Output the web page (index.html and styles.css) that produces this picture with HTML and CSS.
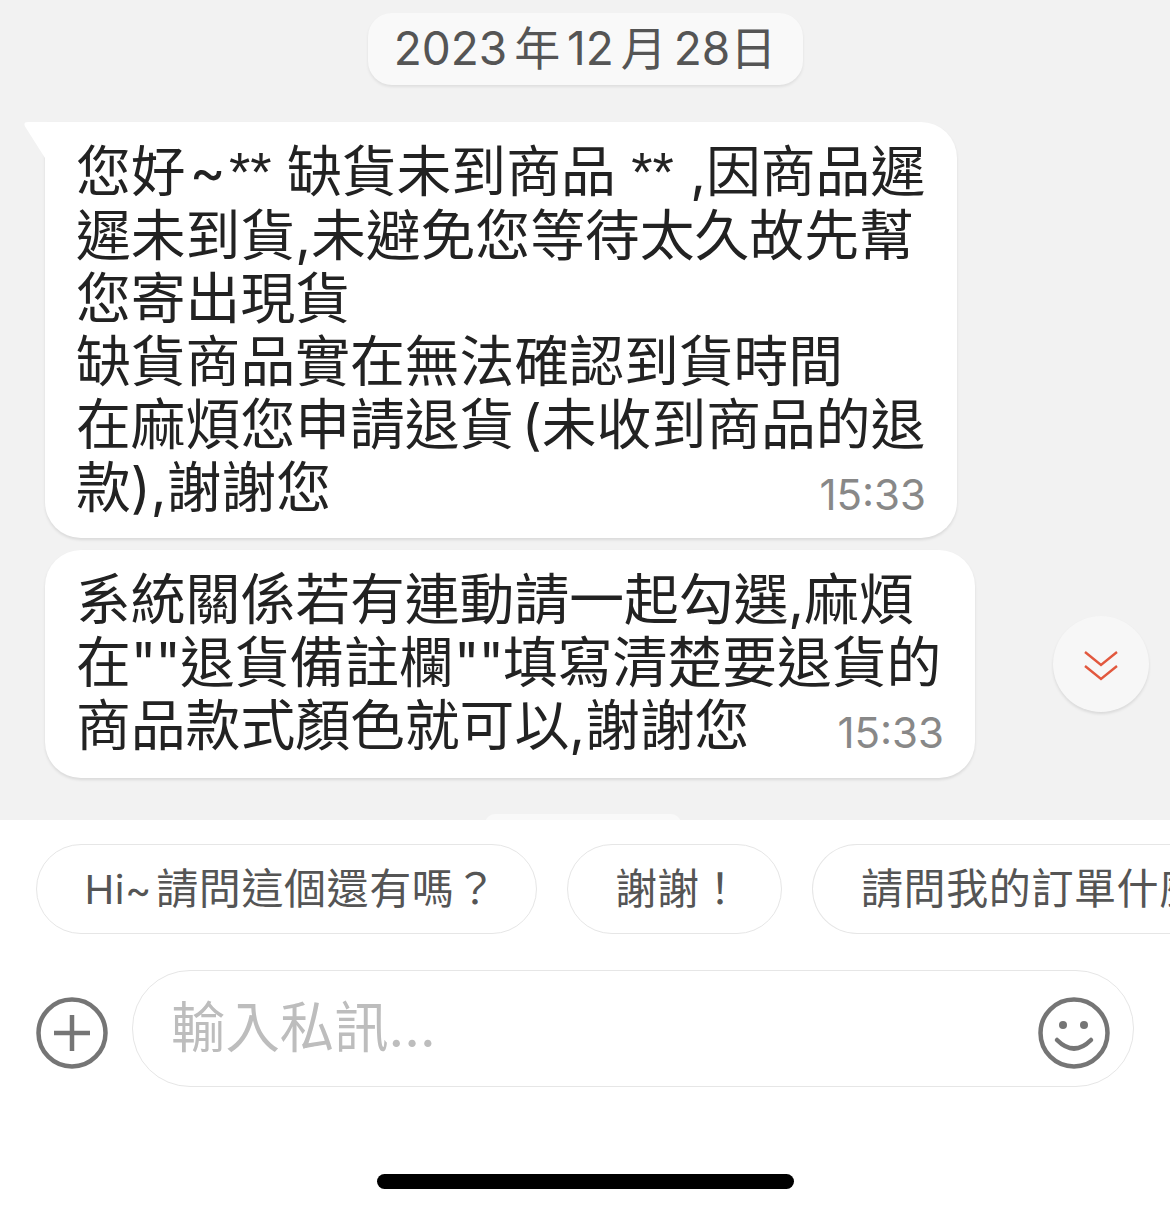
FILE: index.html
```html
<!DOCTYPE html>
<html lang="zh-Hant">
<head>
<meta charset="utf-8">
<title>聊聊</title>
<link rel="stylesheet" href="styles.css">
</head>
<body>
<div class="app">
  <main class="chat">
    <div class="date-row"><div class="date">2023 年 12 月 28日</div></div>
    <div class="bubble bubble-first">
      <svg class="tail" width="24" height="36" viewBox="0 0 24 36"><path d="M21 0H4Q-2 0 2 6L21 36Z" fill="#fff"/></svg>
      <div class="msg">您好<span class="tilde">~</span><span class="star star-a">**</span> 缺貨未到商品 <span class="star star-b">**</span> ,因商品遲<br>遲未到貨,未避免您等待太久故先幫<br>您寄出現貨<br>缺貨商品實在無法確認到貨時間<br>在麻煩您申請退<span class="close">貨 (</span>未收到商品的退</div>
      <div class="last"><span class="msg">款),謝謝您</span><span class="time">15:33</span></div>
    </div>
    <div class="bubble bubble-second">
      <div class="msg">系統關係若有連動請一起勾選,麻煩<br>在<span class="quote">""</span>退貨備註欄<span class="quote">""</span>填寫清楚要退貨的</div>
      <div class="last"><span class="msg">商品款式顏色就可以,謝謝您</span><span class="time">15:33</span></div>
    </div>
    <div class="peek"></div>
    <button class="scroll-down">
      <svg width="36" height="32" viewBox="0 0 36 32" fill="none" stroke="#e2583e" stroke-width="2.4"><path d="M2 2L18 15L34 2"/><path d="M2 16L18 29L34 16"/></svg>
    </button>
  </main>
  <footer class="panel">
    <div class="chips">
      <div class="chip chip-a"><span class="hi">Hi~</span>請問這個還有嗎？</div>
      <div class="chip chip-b">謝謝！</div>
      <div class="chip chip-c">請問我的訂單什麼</div>
    </div>
    <div class="compose">
      <svg class="icon" width="72" height="72" viewBox="0 0 72 72" fill="none" stroke="#757575" stroke-width="4.5"><circle cx="36" cy="36" r="33.5"/><path d="M18 36H54M36 18V54"/></svg>
      <div class="input">
        <span class="placeholder">輸入私訊...</span>
        <svg class="icon" width="72" height="72" viewBox="0 0 72 72" fill="none" stroke="#757575" stroke-width="4.5"><circle cx="36" cy="36" r="33.5"/><circle cx="25" cy="28" r="4" fill="#757575" stroke="none"/><circle cx="46" cy="28" r="4" fill="#757575" stroke="none"/><path d="M19 43Q36 60 53 43" stroke-linecap="round"/></svg>
      </div>
    </div>
    <div class="home-row"><div class="home-bar"></div></div>
  </footer>
</div>
</body>
</html>
```

FILE: styles.css
```css
* { box-sizing: border-box; }
html, body { margin: 0; padding: 0; background: #fff; }
body { font-family: Inter, "Noto Sans CJK TC", sans-serif; }
.app { width: 1170px; height: 1213px; overflow: hidden; display: flex; flex-direction: column; }
.chat { position: relative; height: 820px; background: #f2f2f2; padding: 13px 0 0 45px; overflow: hidden; flex: none; }
.date-row { display: flex; justify-content: center; margin: 0 0 37px -45px; }
.date { height: 72px; width: 435px; border-radius: 24px; background: #f9f9f9; box-shadow: 0 2px 3px rgba(0,0,0,.08); color: #555; font-size: 46px; line-height: 71px; text-align: center; white-space: nowrap; word-spacing: -6px; }
.bubble { position: relative; background: #fff; border-radius: 36px; box-shadow: 0 2px 3px rgba(0,0,0,.1); color: #222; padding: 18px 31px 16px 31px; margin-bottom: 12px; }
.bubble-first { width: 912px; height: 416px; border-top-left-radius: 0; }
.bubble-second { width: 930px; height: 228px; }
.tail { position: absolute; left: -21px; top: 0; }
.msg { font-size: 54.8px; line-height: 63px; white-space: nowrap; }
.tilde { margin-left: 4px; }
.star { font-family: "Liberation Sans", sans-serif; }
.star-a { margin-left: 3px; }
.star-b { margin-right: 1px; }
.close { word-spacing: -8px; }
.quote { letter-spacing: -1px; }
.last { display: flex; justify-content: space-between; align-items: flex-end; }
.time { font-size: 42px; line-height: 62px; color: #888; margin-bottom: -7px; }
.peek { position: absolute; left: 485px; top: 814px; width: 196px; height: 20px; background: #f9f9f9; border-radius: 16px; }
.scroll-down { position: absolute; left: 1053px; top: 616px; width: 96px; height: 96px; padding: 4px 0 0; border: 0; border-radius: 50%; background: #f7f7f7; box-shadow: 0 2px 3px rgba(0,0,0,.1); display: flex; align-items: center; justify-content: center; }
.panel { flex: 1; background: #fff; position: relative; display: flex; flex-direction: column; }
.chips { display: flex; gap: 30px; padding: 24px 0 0 36px; overflow: hidden; }
.chip { flex: none; height: 90px; border: 1.5px solid #e6e6e6; border-radius: 45px; font-size: 42px; line-height: 87px; color: #555; text-align: center; white-space: nowrap; }
.hi { font-size: 40px; margin-right: 4px; }
.chip-a { width: 501px; text-align: left; padding-left: 47.5px; letter-spacing: .6px; }
.chip-b { width: 215px; padding-left: 7px; }
.chip-c { width: 400px; text-align: left; padding-left: 48px; letter-spacing: .6px; border-right: 0; border-radius: 45px 0 0 45px; }
.compose { display: flex; align-items: center; gap: 24px; padding: 36px 36px 0; }
.compose .icon { margin-top: 9px; }
.input { flex: none; width: 1002px; height: 117px; border: 1.5px solid #e6e6e6; border-radius: 58px; display: flex; align-items: center; justify-content: space-between; padding: 0 23px 0 38px; }
.input .icon { margin-top: 8px; }
.placeholder { font-size: 54.4px; color: #bdbdbd; line-height: 63px; margin-bottom: 3px; }
.home-row { display: flex; justify-content: center; padding-top: 87px; }
.home-bar { width: 417px; height: 15px; border-radius: 8px; background: #000; }
```
